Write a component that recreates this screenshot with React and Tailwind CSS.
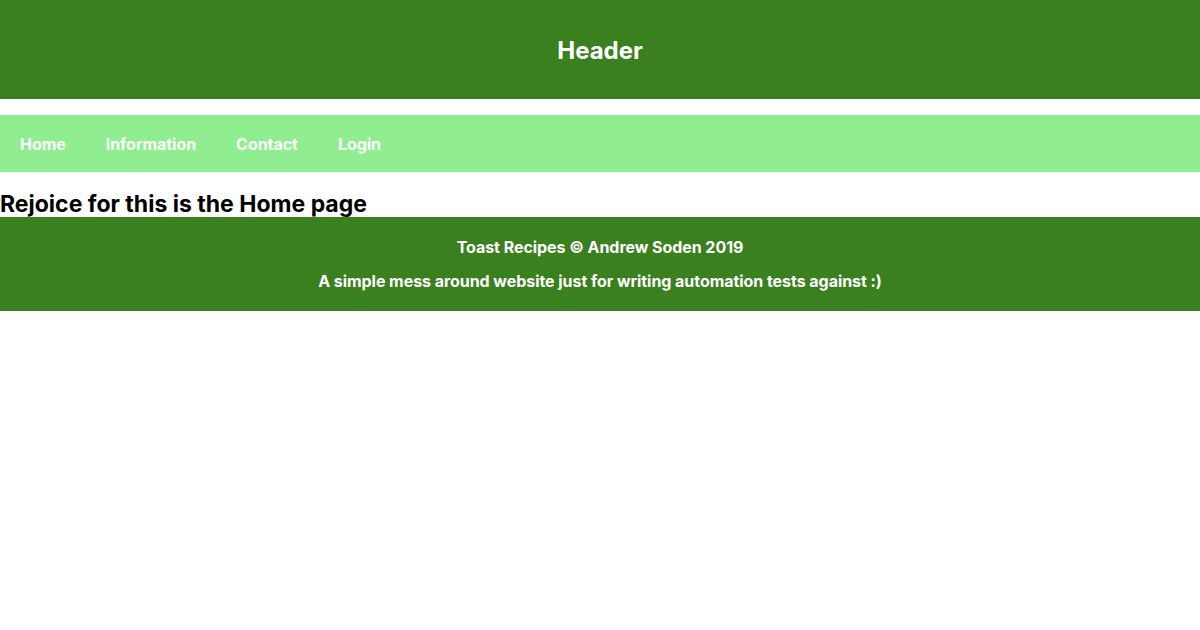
export default function App() {
    const links = ['Home', 'Information', 'Contact', 'Login'];

    return (
        <div className="min-h-[630px] bg-white font-['Inter','Noto_Sans',sans-serif]">
            {/* Header */}
            <header className="h-[99px] bg-[#3b801e] flex items-center justify-center pt-[3px]">
                <h1 className="text-[24px] font-bold text-white leading-none">Header</h1>
            </header>

            {/* Nav */}
            <nav className="mt-4 h-[57px] bg-[#90ee90] flex items-center">
                {links.map((label) => (
                    <a key={label} href="#" className="px-5 text-[16px] font-bold text-white leading-6 tracking-[-0.04px]">
                        {label}
                    </a>
                ))}
            </nav>

            <h2 className="mt-[18px] text-[23px] font-bold text-black leading-[26px] pt-px">
                Rejoice for this is the Home page
            </h2>

            {/* Footer */}
            <footer className="bg-[#3b801e] pt-[18px] pb-[18px] flex flex-col items-center gap-[10px] tracking-[-0.05px]">
                <p className="text-[16px] font-bold text-white leading-6">Toast Recipes © Andrew Soden 2019</p>
                <p className="text-[16px] font-bold text-white leading-6">
                    A simple mess around website just for writing automation tests against :)
                </p>
            </footer>
        </div>
    );
}
